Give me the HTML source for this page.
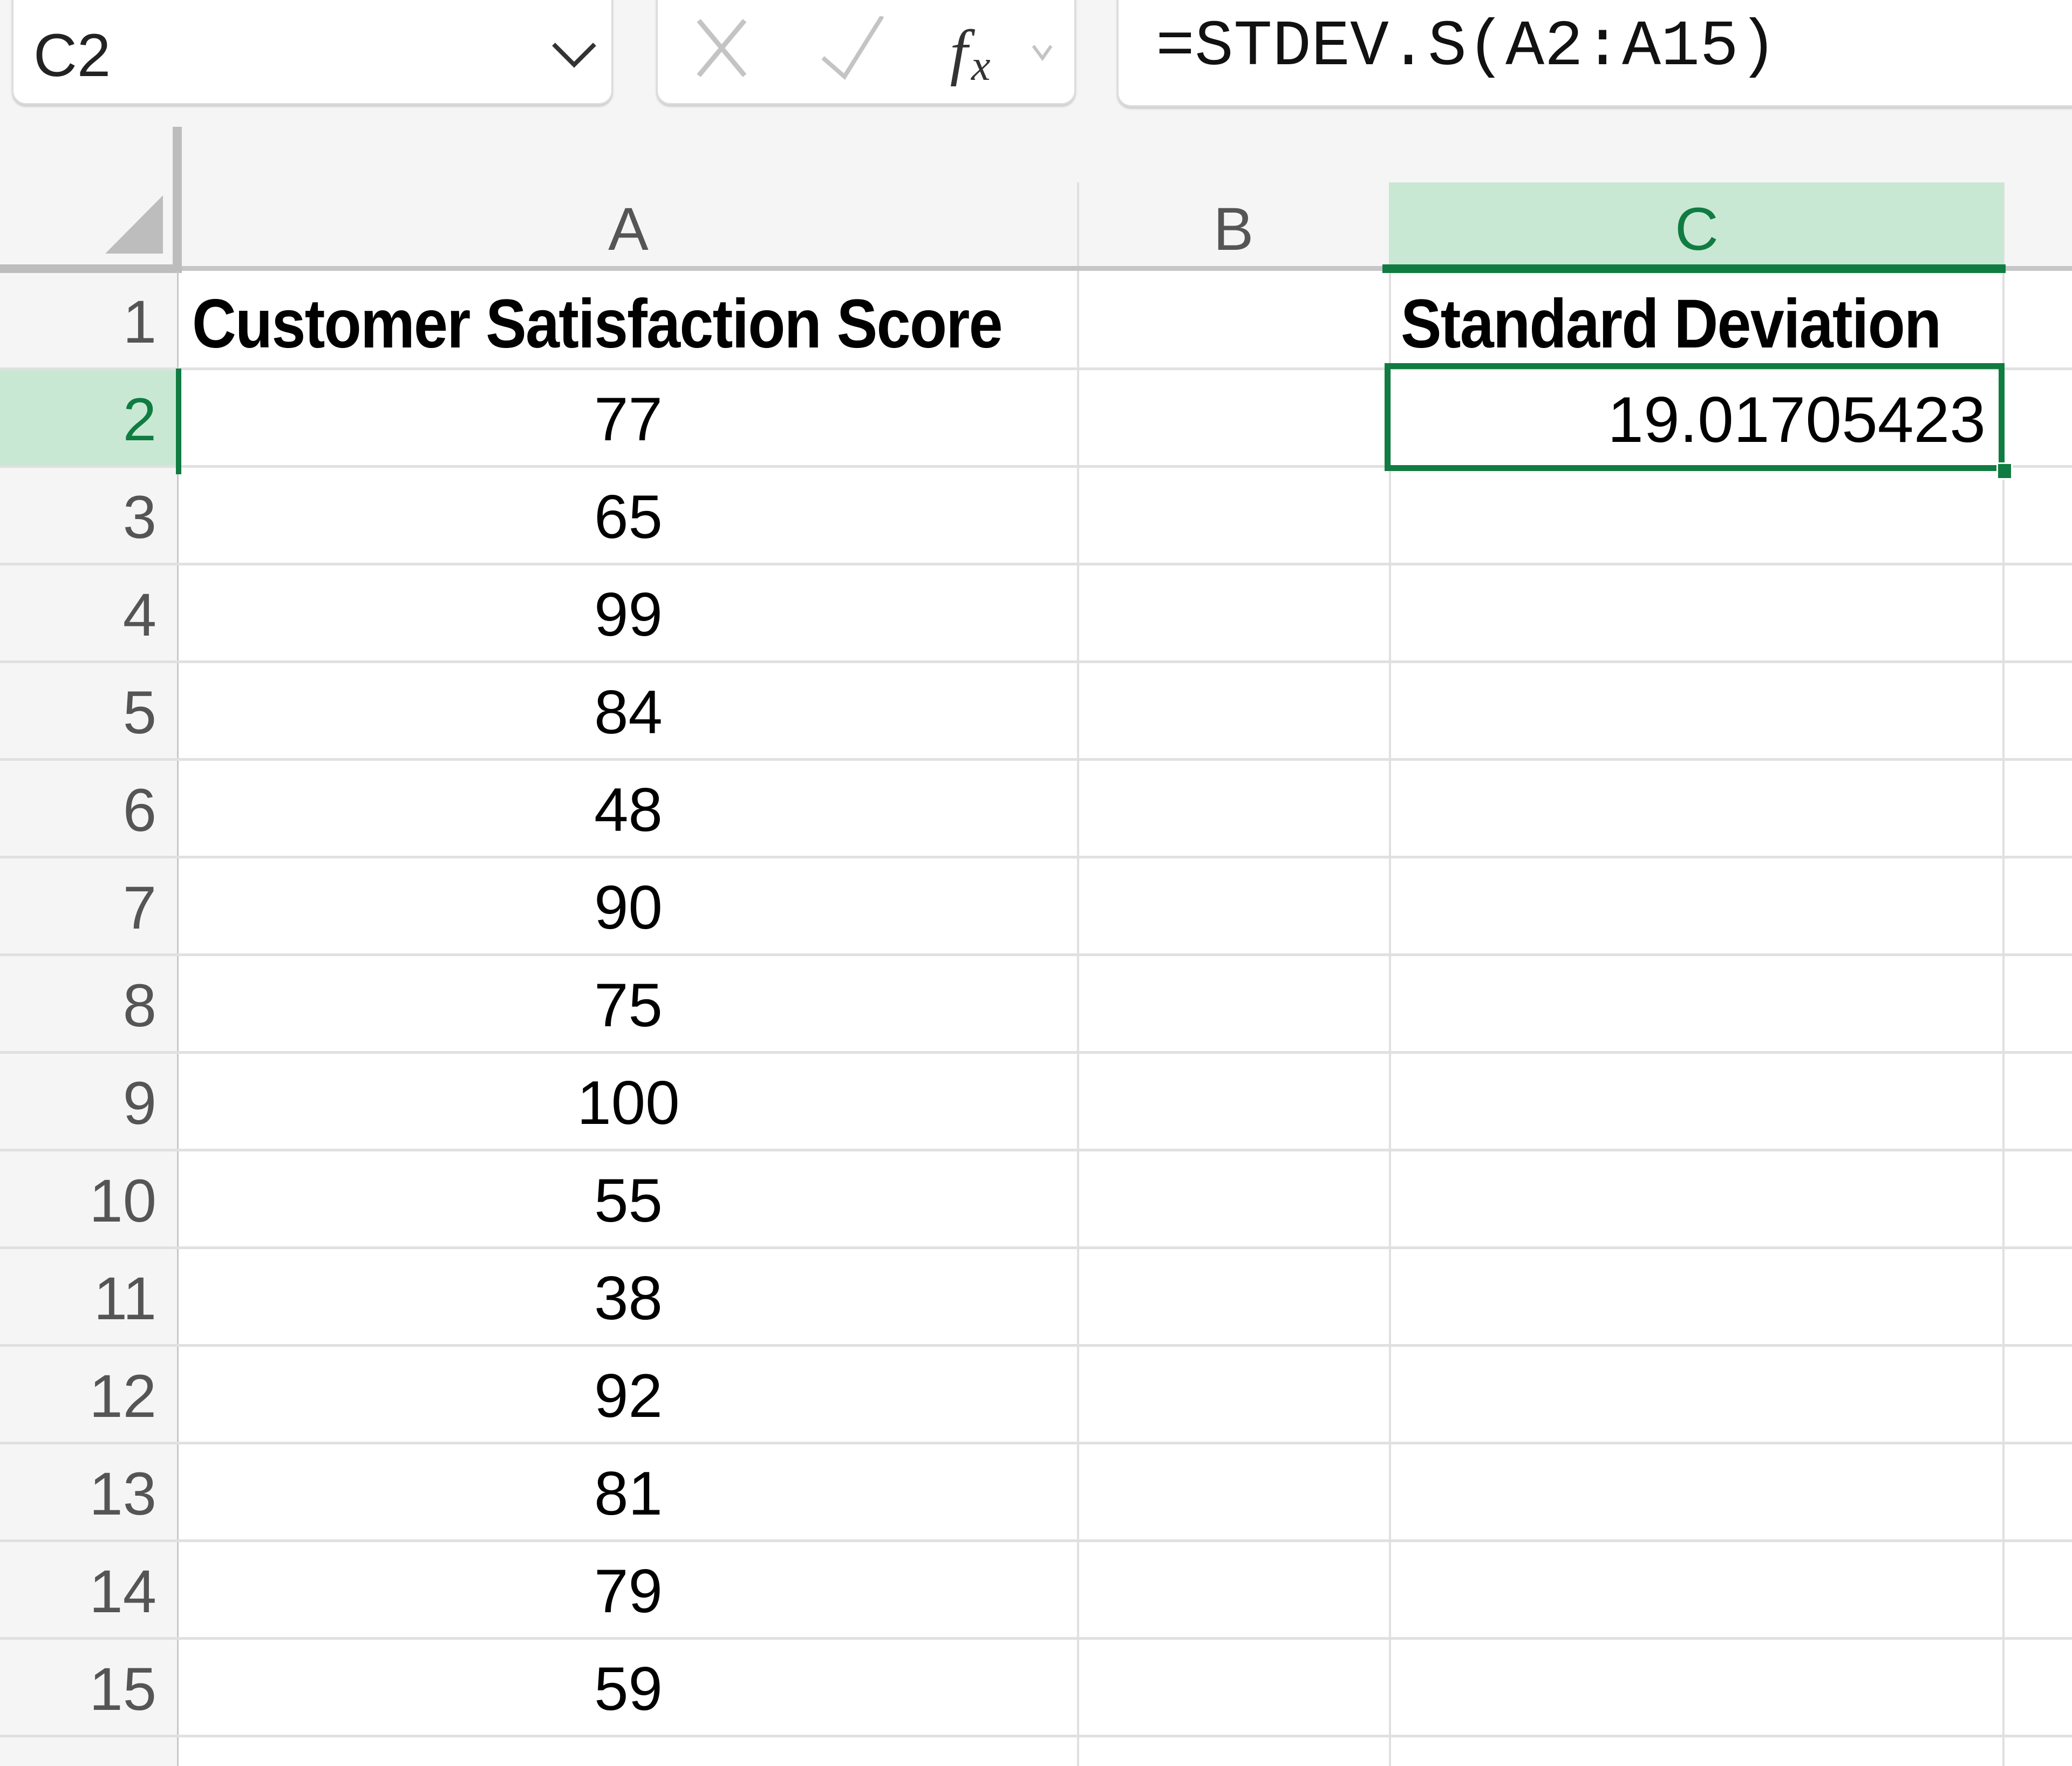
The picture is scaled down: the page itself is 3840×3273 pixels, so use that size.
<!DOCTYPE html>
<html><head><style>
body{margin:0;width:3840px;height:3273px;background:#f5f5f5;position:relative;overflow:hidden;font-family:"Liberation Sans",Arial,sans-serif}
.a{position:absolute}
.box{position:absolute;background:#fff;border:3px solid #dcdcdc;border-radius:26px;box-shadow:0 4px 3px #d0d0d0}
.rn{position:absolute;left:0;width:290px;text-align:right;font-size:112px;color:#555;height:181px;line-height:190px}
.v{position:absolute;left:331px;width:1667px;text-align:center;font-size:114px;color:#000;height:181px;line-height:190px}
.hl{position:absolute;left:0;width:3840px;height:5px;background:#e0e0e0}
</style></head><body>
<div class="box" style="left:22px;top:-30px;width:1108px;height:218px"></div>
<div class="a" style="left:62px;top:38px;font-size:112px;color:#222">C2</div>
<svg class="a" style="left:1020px;top:70px" width="90" height="60"><path d="M6 12 L44 50 L82 12" stroke="#333" stroke-width="8" fill="none"/></svg>
<div class="box" style="left:1216px;top:-30px;width:772px;height:218px"></div>
<svg class="a" style="left:1280px;top:30px" width="700" height="130"><path d="M15 8 L100 110 M100 8 L15 110" stroke="#c4c4c4" stroke-width="9" fill="none"/><path d="M245 85 L285 120 L355 8" stroke="#c4c4c4" stroke-width="8" fill="none" transform="translate(0,-8)"/><text x="480" y="108" font-family="Liberation Serif,serif" font-style="italic" font-size="120" fill="#333">f</text><text x="520" y="118" font-family="Liberation Serif,serif" font-style="italic" font-size="80" fill="#333">x</text><path d="M635 55 L652 78 L668 55" stroke="#c4c4c4" stroke-width="6" fill="none"/></svg>
<div class="box" style="left:2070px;top:-30px;width:1850px;height:222px"></div>
<div class="a" style="left:2142px;top:20px;font-family:'Liberation Mono',monospace;font-size:120px;color:#111">=STDEV.S(A2:A15)</div>
<div class="a" style="left:331px;top:502px;width:3509px;height:2771px;background:#fff"></div>
<div class="a" style="left:1996px;top:338px;width:4px;height:2935px;background:#e0e0e0"></div>
<div class="a" style="left:2574px;top:338px;width:4px;height:2935px;background:#e0e0e0"></div>
<div class="a" style="left:3711px;top:338px;width:4px;height:2935px;background:#e0e0e0"></div>
<div class="a" style="left:2574px;top:338px;width:1139px;height:160px;background:#c9e8d4"></div>
<div class="a" style="left:0;top:493px;width:3840px;height:9px;background:#c6c6c6"></div>
<div class="a" style="left:2562px;top:490px;width:1155px;height:16px;background:#107c41"></div>
<div class="a" style="left:331px;top:345px;width:1667px;text-align:center;font-size:112px;line-height:160px;color:#555">A</div>
<div class="a" style="left:1998px;top:345px;width:576px;text-align:center;font-size:112px;line-height:160px;color:#555">B</div>
<div class="a" style="left:2576px;top:345px;width:1137px;text-align:center;font-size:112px;line-height:160px;color:#107c41">C</div>
<div class="a" style="left:320px;top:235px;width:17px;height:271px;background:#bdbdbd"></div>
<div class="a" style="left:0;top:490px;width:337px;height:16px;background:#bdbdbd"></div>
<svg class="a" style="left:195px;top:362px" width="108" height="108"><path d="M0 108 L107 0 L107 108Z" fill="#bdbdbd"/></svg>
<div class="a" style="left:328px;top:502px;width:3px;height:2771px;background:#c8c8c8"></div>
<div class="hl" style="top:681px"></div><div class="hl" style="top:862px"></div><div class="hl" style="top:1043px"></div><div class="hl" style="top:1224px"></div><div class="hl" style="top:1405px"></div><div class="hl" style="top:1586px"></div><div class="hl" style="top:1767px"></div><div class="hl" style="top:1948px"></div><div class="hl" style="top:2129px"></div><div class="hl" style="top:2310px"></div><div class="hl" style="top:2491px"></div><div class="hl" style="top:2672px"></div><div class="hl" style="top:2853px"></div><div class="hl" style="top:3034px"></div><div class="hl" style="top:3215px"></div>
<div class="a" style="left:0;top:686px;width:326px;height:176px;background:#c9e8d4"></div>
<div class="a" style="left:326px;top:683px;width:10px;height:196px;background:#107c41"></div>
<div class="rn" style="top:502px">1</div>
<div class="rn" style="top:683px;color:#107c41">2</div>
<div class="rn" style="top:864px">3</div><div class="rn" style="top:1045px">4</div><div class="rn" style="top:1226px">5</div><div class="rn" style="top:1407px">6</div><div class="rn" style="top:1588px">7</div><div class="rn" style="top:1769px">8</div><div class="rn" style="top:1950px">9</div><div class="rn" style="top:2131px">10</div><div class="rn" style="top:2312px">11</div><div class="rn" style="top:2493px">12</div><div class="rn" style="top:2674px">13</div><div class="rn" style="top:2855px">14</div><div class="rn" style="top:3036px">15</div>
<div class="a" style="left:356px;top:510px;height:181px;line-height:181px;font-size:128px;font-weight:bold;transform:scaleX(0.885);transform-origin:0 50%;white-space:nowrap;letter-spacing:-2px">Customer Satisfaction Score</div>
<div class="a" style="left:2596px;top:510px;height:181px;line-height:181px;font-size:128px;font-weight:bold;transform:scaleX(0.885);transform-origin:0 50%;white-space:nowrap;letter-spacing:-2px">Standard Deviation</div>
<div class="v" style="top:683px">77</div><div class="v" style="top:864px">65</div><div class="v" style="top:1045px">99</div><div class="v" style="top:1226px">84</div><div class="v" style="top:1407px">48</div><div class="v" style="top:1588px">90</div><div class="v" style="top:1769px">75</div><div class="v" style="top:1950px">100</div><div class="v" style="top:2131px">55</div><div class="v" style="top:2312px">38</div><div class="v" style="top:2493px">92</div><div class="v" style="top:2674px">81</div><div class="v" style="top:2855px">79</div><div class="v" style="top:3036px">59</div>
<div class="a" style="left:2566px;top:673px;width:1149px;height:200px;box-sizing:border-box;border:11px solid #107c41"></div>
<div class="a" style="left:3700px;top:857px;width:24px;height:26px;background:#107c41;border:3px solid #fff"></div>
<div class="a" style="left:2570px;top:683px;width:1110px;text-align:right;font-size:120px;line-height:190px;color:#000">19.01705423</div>
</body></html>
